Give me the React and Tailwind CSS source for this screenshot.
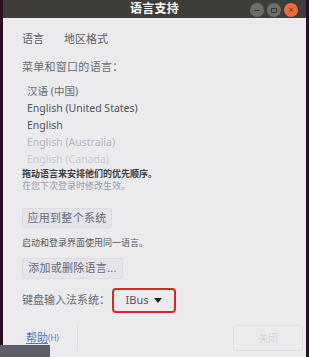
import React from 'react';

const font = { fontFamily: '"Noto Sans", "Noto Sans CJK SC", sans-serif' };

const WindowButtons = () => (
  <div className="absolute right-[8px] top-[3px] flex gap-[3px]">
    <span className="w-[14px] h-[14px] rounded-full bg-[#6e6d69] flex items-center justify-center">
      <span className="w-[6px] h-[1px] bg-[#3b3a36]" />
    </span>
    <span className="w-[14px] h-[14px] rounded-full bg-[#6e6d69] flex items-center justify-center">
      <span className="w-[6px] h-[5px] border border-[#3b3a36]" />
    </span>
    <span className="w-[14px] h-[14px] rounded-full bg-[#ee6b3a] flex items-center justify-center text-[8px] leading-none text-[#5a2a16]">×</span>
  </div>
);

const App = () => {
  const langs = [
    { name: '汉语 (中国)', cls: 'text-[#6a6a70]' },
    { name: 'English (United States)', cls: 'text-[#55555c]' },
    { name: 'English', cls: 'text-[#55555c]' },
    { name: 'English (Australia)', cls: 'text-[#b4b4c0]' },
    { name: 'English (Canada)', cls: 'text-[#c8c8d2]' },
  ];

  return (
    <div className="w-[309px] h-[357px] bg-[#2a0d22] relative overflow-hidden" style={font}>
      <div className="ml-[3px] w-[303px] h-[357px] flex flex-col bg-[#ebebee]">
        {/* title bar */}
        <div className="relative h-[18px] bg-[#3e3d39] flex items-center justify-center">
          <span className="text-white text-[12px] font-bold leading-none tracking-wide">语言支持</span>
          <WindowButtons />
        </div>

        <div className="flex flex-col pl-[19px] pr-[16px]">
          {/* tabs */}
          <div className="flex gap-[20px] pt-[15px] text-[11px] text-[#606068] leading-none">
            <span>语言</span>
            <span>地区格式</span>
          </div>

          <div className="mt-[17px] text-[11px] text-[#6a6a72] leading-none tracking-wide">菜单和窗口的语言：</div>

          <div className="mt-[11px] ml-[5px] flex flex-col text-[10.5px] leading-[17px]">
            {langs.map((l) => (
              <span key={l.name} className={l.cls}>{l.name}</span>
            ))}
          </div>

          <div className="mt-[0px] text-[9px] font-bold text-[#3e3e46] leading-[12px]">拖动语言来安排他们的优先顺序。</div>
          <div className="text-[9px] text-[#9a9aa8] leading-[12px]">在您下次登录时修改生效。</div>

          <div className="mt-[16px] w-[90px] h-[20px] flex items-center justify-center bg-[#e4e4ea] border border-[#dcdce2] rounded-[2px] text-[11px] text-[#6a6a78] tracking-wide">
            应用到整个系统
          </div>

          <div className="mt-[9px] text-[9px] text-[#55555e] leading-[12px]">启动和登录界面使用同一语言。</div>

          <div className="mt-[9px] w-[101px] h-[21px] flex items-center justify-center bg-[#e4e4ea] border border-[#dcdce2] rounded-[2px] text-[11px] text-[#6a6a78] tracking-wide">
            添加或删除语言...
          </div>

          <div className="mt-[9px] flex items-center">
            <span className="text-[11px] text-[#6a6a74] whitespace-nowrap w-[90px]">键盘输入法系统：</span>
            <div className="w-[64px] h-[25px] border-[2px] border-[#d9262b] rounded-[4px] flex items-center justify-center gap-[6px] text-[11px] text-[#55555e]">
              <span>IBus</span>
              <span className="w-0 h-0 border-l-[4px] border-r-[4px] border-t-[5px] border-l-transparent border-r-transparent border-t-[#222]" />
            </div>
          </div>
        </div>

        {/* bottom buttons */}
        <div className="mt-[12px] flex justify-between pl-[10px] pr-[3px]">
          <div className="w-[65px] h-[26px] border-r border-[#dcdce2] flex items-center pl-[13px] text-[11px] text-[#4a7ec0]">
            <span className="underline decoration-[#4a7ec0]">帮助</span>
            <span className="text-[8px]">(H)</span>
          </div>
          <div className="w-[70px] h-[26px] border border-[#dddde3] rounded-[3px] flex items-center justify-center text-[10px] text-[#d4d4dc]">
            关闭
          </div>
        </div>
      </div>
      <div className="absolute left-0 bottom-0 w-[50px] h-[12px] bg-[#5e5d6a]" />
    </div>
  );
};

export default App;
